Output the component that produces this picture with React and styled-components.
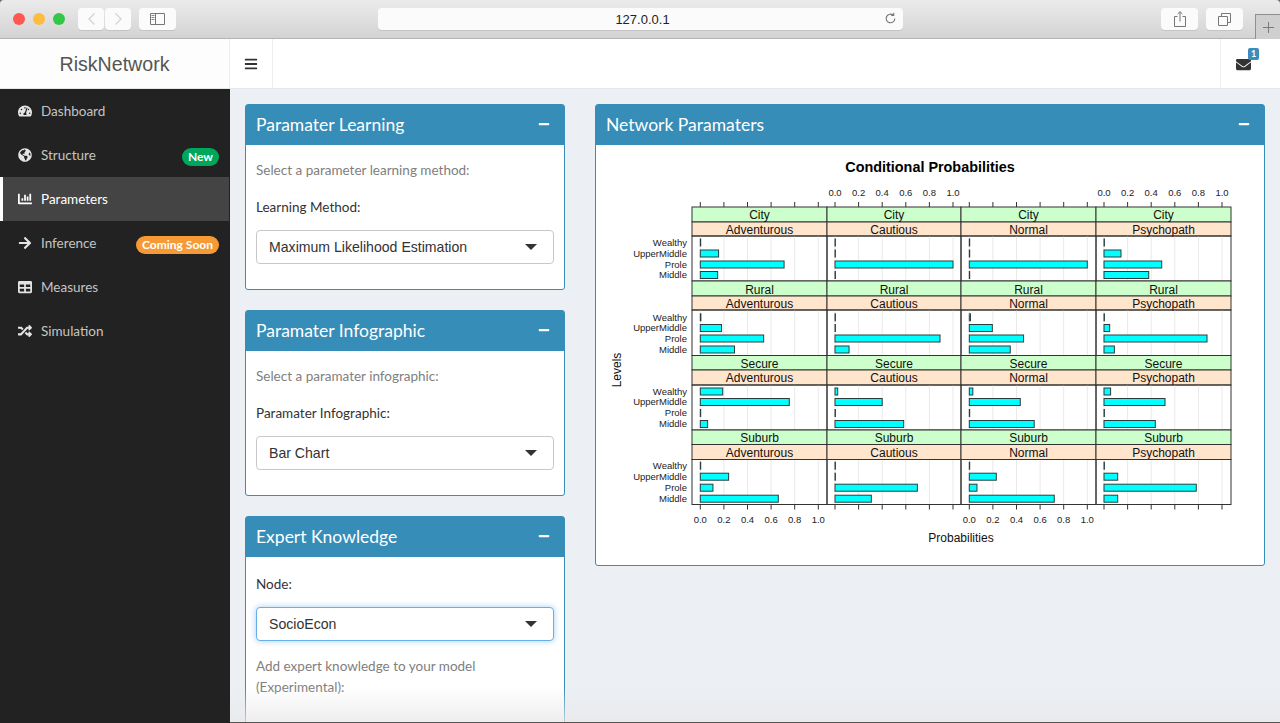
import * as React from "react";
import styled, { createGlobalStyle } from "styled-components";
import {
  FaTachometerAlt,
  FaGlobeAmericas,
  FaChartBar,
  FaArrowRight,
  FaTable,
  FaRandom,
  FaBars,
  FaEnvelope,
  FaMinus,
} from "react-icons/fa";

const Global = createGlobalStyle`
  html, body {
    margin: 0;
    padding: 0;
    height: 100%;
    overflow: hidden;
    background: #6b6b6b;
  }
  * { box-sizing: border-box; }
`;

const Page = styled.div`
  width: 1280px;
  height: 723px;
  overflow: hidden;
  display: flex;
  flex-direction: column;
  font-family: Lato, "Noto Sans", sans-serif;
  font-size: 14px;
`;

/* ---- safari toolbar ---- */
const Chrome = styled.div`
  height: 39px;
  flex: none;
  display: flex;
  align-items: flex-start;
  padding: 8px 0 0 13px;
  background: linear-gradient(#ebebeb, #d3d3d3);
  border-bottom: 1px solid #b4b4b4;
  border-radius: 4px 4px 0 0;
`;
const Light = styled.span`
  width: 12px;
  height: 12px;
  margin: 5px 8px 0 0;
  border-radius: 50%;
  background: ${(p) => p.$color};
`;
const ChromeBtn = styled.div`
  width: ${(p) => p.$w}px;
  height: 22px;
  margin-left: ${(p) => p.$ml || 0}px;
  display: flex;
  align-items: center;
  justify-content: center;
  background: #fbfbfb;
  border-radius: 4px;
  box-shadow: 0 1px 0 #c4c4c4;
`;
const AddressBar = styled.div`
  position: relative;
  width: 525px;
  height: 22px;
  margin-left: 202px;
  display: flex;
  align-items: center;
  justify-content: center;
  padding-left: 4px;
  background: #fbfbfb;
  border-radius: 4px;
  box-shadow: 0 1px 0 #c4c4c4;
  font-family: "Liberation Sans", sans-serif;
  font-size: 13px;
  color: #222;
  svg {
    position: absolute;
    right: 6px;
    top: 4px;
  }
`;
const NewTab = styled.div`
  width: 25px;
  height: 25px;
  margin: 6px 0 0 auto;
  display: flex;
  align-items: center;
  justify-content: center;
  border: 1px solid #8f8f8f;
  border-width: 1px 0 0 1px;
  background: #cfcfcf;
`;

/* ---- admin header ---- */
const TopNav = styled.header`
  height: 50px;
  flex: none;
  display: flex;
  background: #fff;
  border-bottom: 1px solid #e4e7ec;
`;
const Logo = styled.div`
  width: 230px;
  display: flex;
  align-items: center;
  justify-content: center;
  padding-top: 2px;
  background: #fdfdfd;
  border-right: 1px solid #eee;
  font-family: "Liberation Sans", sans-serif;
  font-size: 19.6px;
  color: #555;
`;
const Toggle = styled.div`
  width: 43px;
  display: flex;
  align-items: center;
  justify-content: center;
  border-right: 1px solid #eee;
  color: #333;
  font-size: 14px;
`;
const NavRight = styled.div`
  position: relative;
  width: 60px;
  margin-left: auto;
  display: flex;
  align-items: center;
  justify-content: center;
  padding: 2px 14px 0 0;
  border-left: 1px solid #eee;
  color: #333;
  font-size: 15px;
`;
const MailCount = styled.span`
  position: absolute;
  top: 9px;
  left: 27px;
  width: 11px;
  height: 12px;
  border-radius: 2px;
  background: #3c8dbc;
  color: #fff;
  font-size: 9px;
  font-weight: 700;
  line-height: 12px;
  text-align: center;
`;

/* ---- sidebar ---- */
const Body = styled.div`
  flex: 1;
  min-height: 0;
  display: flex;
`;
const Sidebar = styled.nav`
  width: 230px;
  flex: none;
  background: #222;
`;
const MenuItem = styled.div`
  height: 44px;
  margin-right: 1px;
  display: flex;
  align-items: center;
  padding: 0 10px 0 ${(p) => (p.$active ? 15 : 18)}px;
  border-left: ${(p) => (p.$active ? "3px solid #fff" : "none")};
  background: ${(p) => (p.$active ? "#444" : "transparent")};
  color: ${(p) => (p.$active ? "#fff" : "#c4c4c4")};
  font-size: 13.5px;
`;
const MenuIcon = styled.span`
  width: 23px;
  flex: none;
  display: flex;
  color: ${(p) => (p.$active ? "#fff" : "#e4e4e4")};
  font-size: 14px;
`;
const Badge = styled.span`
  height: 18px;
  margin: 3px 0 0 auto;
  padding: 0 6px;
  border-radius: 9px;
  background: ${(p) => p.$color};
  color: #fff;
  font-size: 12px;
  font-weight: 700;
  line-height: 18px;
`;

/* ---- content ---- */
const Content = styled.main`
  position: relative;
  flex: 1;
  display: flex;
  align-items: flex-start;
  gap: 30px;
  padding: 15px 15px 0;
  overflow: hidden;
  background: #ecf0f5;
`;
const LeftColumn = styled.div`
  width: 320px;
  flex: none;
  display: flex;
  flex-direction: column;
  gap: 20px;
`;
const Box = styled.section`
  flex: none;
  background: #fff;
  border: 1px solid #368db8;
  border-radius: 3px;
`;
const BoxHeader = styled.div`
  height: 40px;
  display: flex;
  align-items: center;
  justify-content: space-between;
  padding: 0 14px 2px 10px;
  background: #368db8;
  color: #fff;
  font-size: 17.5px;
`;
const Collapse = styled.span`
  display: flex;
  font-size: 12px;
`;
const BoxBody = styled.div`
  padding: ${(p) => p.$pt || 15}px 10px ${(p) => p.$pb}px;
`;
const Help = styled.p`
  margin: 0 0 ${(p) => p.$mb || 0}px;
  color: #808080;
  font-size: 13.5px;
  line-height: 21px;
`;
const Label = styled.div`
  margin-bottom: 13px;
  color: #333;
  font-size: 13.5px;
  line-height: 20px;
`;
const SelectBox = styled.div`
  height: 34px;
  margin-bottom: ${(p) => p.$mb || 0}px;
  display: flex;
  align-items: center;
  justify-content: space-between;
  padding: 0 16px 0 12px;
  background: #fff;
  border: 1px solid ${(p) => (p.$focused ? "#66afe9" : "#c8c8c8")};
  border-radius: 4px;
  box-shadow: ${(p) => (p.$focused ? "0 0 6px rgba(102, 175, 233, 0.6)" : "none")};
  font-family: "Liberation Sans", sans-serif;
  font-size: 14.1px;
  color: #333;
`;
const Caret = styled.span`
  width: 0;
  height: 0;
  border-style: solid;
  border-width: 6px 6px 0;
  border-color: #333 transparent transparent;
`;
const ChartBox = styled(Box)`
  width: 670px;
`;
const Fade = styled.div`
  position: absolute;
  left: 0;
  right: 0;
  bottom: 0;
  height: 36px;
  background: linear-gradient(rgba(235, 235, 235, 0), rgba(232, 232, 232, 0.75));
  border-bottom: 1px solid #555;
  pointer-events: none;
`;
const ChartSvg = styled.svg`
  display: block;
  font-family: "Liberation Sans", sans-serif;
`;

const columnX = [692, 827, 961, 1096, 1231];
const zeroX = [700.3, 835, 969.3, 1104];
const SCALE = 118;
const ticks = [0, 0.2, 0.4, 0.6, 0.8, 1];
const levels = ["Wealthy", "UpperMiddle", "Prole", "Middle"];
const personalities = ["Adventurous", "Cautious", "Normal", "Psychopath"];

const rows = [
  {
    name: "City",
    top: 207,
    strip: 222,
    panel: 236,
    bottom: 281,
    nameY: 218.5,
    typeY: 233.5,
    y: [242.5, 253.5, 264.5, 275],
    values: [
      [0, 0.155, 0.71, 0.147],
      [0, 0, 1, 0],
      [0, 0, 1, 0],
      [0, 0.144, 0.489, 0.379],
    ],
  },
  {
    name: "Rural",
    top: 281,
    strip: 296,
    panel: 310,
    bottom: 355.5,
    nameY: 293.5,
    typeY: 307.5,
    y: [317.3, 328, 338.5, 349.5],
    values: [
      [0.005, 0.18, 0.537, 0.29],
      [0, 0, 0.89, 0.119],
      [0.01, 0.195, 0.46, 0.347],
      [0, 0.048, 0.873, 0.088],
    ],
  },
  {
    name: "Secure",
    top: 355.5,
    strip: 370,
    panel: 385,
    bottom: 430,
    nameY: 368,
    typeY: 381.5,
    y: [391.5, 402, 413, 424],
    values: [
      [0.19, 0.754, 0, 0.062],
      [0.023, 0.4, 0, 0.582],
      [0.03, 0.432, 0, 0.55],
      [0.056, 0.517, 0, 0.435],
    ],
  },
  {
    name: "Suburb",
    top: 430,
    strip: 444.5,
    panel: 459.5,
    bottom: 504.5,
    nameY: 442,
    typeY: 457,
    y: [465.7, 476.7, 487.7, 498.7],
    values: [
      [0, 0.24, 0.107, 0.661],
      [0, 0, 0.698, 0.308],
      [0, 0.229, 0.065, 0.72],
      [0, 0.116, 0.782, 0.116],
    ],
  },
];

const Axis = ({ tickFrom, tickTo, labelY, labelled }) =>
  zeroX.map((zero, c) =>
    ticks.map((t) => (
      <g key={`${c}-${t}`}>
        <line x1={zero + t * SCALE} x2={zero + t * SCALE} y1={tickFrom} y2={tickTo} stroke="#333" />
        {labelled.includes(c) && (
          <text x={zero + t * SCALE} y={labelY} fontSize="9.5" fill="#222" textAnchor="middle">
            {t.toFixed(1)}
          </text>
        )}
      </g>
    ))
  );

const Row = ({ row }) => (
  <g>
    {personalities.map((type, c) => {
      const left = columnX[c];
      const right = columnX[c + 1];
      const mid = (left + right) / 2;
      return (
        <g key={type}>
          <rect x={left} y={row.top} width={right - left} height={row.strip - row.top} fill="#ccffcc" stroke="#333" />
          <rect x={left} y={row.strip} width={right - left} height={row.panel - row.strip} fill="#ffe5cc" stroke="#333" />
          <text x={mid} y={row.nameY} fontSize="12" fill="#111" textAnchor="middle">{row.name}</text>
          <text x={mid} y={row.typeY} fontSize="12" fill="#111" textAnchor="middle">{type}</text>
          {ticks.map((t) => (
            <line
              key={t}
              x1={zeroX[c] + t * SCALE}
              x2={zeroX[c] + t * SCALE}
              y1={row.panel}
              y2={row.bottom}
              stroke="#e9e9e9"
            />
          ))}
          {row.values[c].map((v, i) => (
            <rect
              key={levels[i]}
              x={zeroX[c]}
              y={row.y[i] - 3.5}
              width={Math.max(v * SCALE, 0.4)}
              height={7}
              fill="#00ffff"
              stroke="#2c3c3c"
              strokeWidth="1"
            />
          ))}
          <rect x={left} y={row.panel} width={right - left} height={row.bottom - row.panel} fill="none" stroke="#333" />
        </g>
      );
    })}
    {levels.map((level, i) => (
      <text key={level} x={687} y={row.y[i] + 3.4} fontSize="9.5" fill="#222" textAnchor="end">
        {level}
      </text>
    ))}
  </g>
);

const ProbabilityChart = () => (
  <ChartSvg width="668" height="420" viewBox="596 145 668 420">
    <text x={930} y={172} fontSize="14.4" fontWeight="700" fill="#000" textAnchor="middle">
      Conditional Probabilities
    </text>
    <Axis tickFrom={202} tickTo={207} labelY={196} labelled={[1, 3]} />
    <Axis tickFrom={504.5} tickTo={509.5} labelY={523} labelled={[0, 2]} />
    {rows.map((row) => (
      <Row key={row.name} row={row} />
    ))}
    <text x={961} y={542} fontSize="12" fill="#111" textAnchor="middle">Probabilities</text>
    <text transform="translate(621 370) rotate(-90)" fontSize="12" fill="#111" textAnchor="middle">Levels</text>
  </ChartSvg>
);

const menu = [
  { label: "Dashboard", icon: <FaTachometerAlt /> },
  { label: "Structure", icon: <FaGlobeAmericas />, badge: "New", color: "#00a65a" },
  { label: "Parameters", icon: <FaChartBar />, active: true },
  { label: "Inference", icon: <FaArrowRight />, badge: "Coming Soon", color: "#f59a35" },
  { label: "Measures", icon: <FaTable /> },
  { label: "Simulation", icon: <FaRandom /> },
];

const Panel = ({ title, children, pt, pb }) => (
  <Box>
    <BoxHeader>
      {title}
      <Collapse><FaMinus /></Collapse>
    </BoxHeader>
    <BoxBody $pt={pt} $pb={pb}>{children}</BoxBody>
  </Box>
);

const Select = ({ value, focused, mb }) => (
  <SelectBox $focused={focused} $mb={mb}>
    {value}
    <Caret />
  </SelectBox>
);

const App = () => (
  <Page>
    <Global />
    <Chrome>
      <Light $color="#fc5753" />
      <Light $color="#fdbc40" />
      <Light $color="#33c748" />
      <ChromeBtn $w={26} $ml={5}>
        <svg width="9" height="14" viewBox="0 0 9 14"><path d="M7.5 1.5 2 7l5.5 5.5" fill="none" stroke="#d4d4d4" strokeWidth="1.4" /></svg>
      </ChromeBtn>
      <ChromeBtn $w={26} $ml={1}>
        <svg width="9" height="14" viewBox="0 0 9 14"><path d="M1.5 1.5 7 7l-5.5 5.5" fill="none" stroke="#d4d4d4" strokeWidth="1.4" /></svg>
      </ChromeBtn>
      <ChromeBtn $w={37} $ml={8}>
        <svg width="15" height="12" viewBox="0 0 15 12">
          <path d="M.5.5h14v11H.5zM5.5.5v11" fill="none" stroke="#777" />
          <path d="M1.5 2.5h3M1.5 4.5h3M1.5 6.5h3" stroke="#888" />
        </svg>
      </ChromeBtn>
      <AddressBar>
        127.0.0.1
        <svg width="13" height="13" viewBox="0 0 12 12">
          <path d="M10 6a4 4 0 1 1-1.3-3M9 .8V3.2H6.6" fill="none" stroke="#777" />
        </svg>
      </AddressBar>
      <ChromeBtn $w={37} $ml={258}>
        <svg width="12" height="16" viewBox="0 0 12 16">
          <path d="M3.5 5.5h-3v10h11v-10h-3M6 10.5V.8M3.6 3 6 .7 8.4 3" fill="none" stroke="#777" />
        </svg>
      </ChromeBtn>
      <ChromeBtn $w={37} $ml={8}>
        <svg width="13" height="13" viewBox="0 0 13 13">
          <path d="M.5 3.5h9v9h-9zM3.5 3.5v-3h9v9h-3" fill="none" stroke="#777" />
        </svg>
      </ChromeBtn>
      <NewTab>
        <svg width="11" height="11" viewBox="0 0 11 11"><path d="M5.5 0v11M0 5.5h11" stroke="#7a7a7a" /></svg>
      </NewTab>
    </Chrome>
    <TopNav>
      <Logo>RiskNetwork</Logo>
      <Toggle><FaBars /></Toggle>
      <NavRight>
        <FaEnvelope />
        <MailCount>1</MailCount>
      </NavRight>
    </TopNav>
    <Body>
      <Sidebar>
        {menu.map((item) => (
          <MenuItem key={item.label} $active={item.active}>
            <MenuIcon $active={item.active}>{item.icon}</MenuIcon>
            {item.label}
            {item.badge && <Badge $color={item.color}>{item.badge}</Badge>}
          </MenuItem>
        ))}
      </Sidebar>
      <Content>
        <LeftColumn>
          <Panel title="Paramater Learning" pb={25}>
            <Help $mb={16}>Select a parameter learning method:</Help>
            <Label>Learning Method:</Label>
            <Select value="Maximum Likelihood Estimation" />
          </Panel>
          <Panel title="Paramater Infographic" pb={25}>
            <Help $mb={16}>Select a paramater infographic:</Help>
            <Label>Paramater Infographic:</Label>
            <Select value="Bar Chart" />
          </Panel>
          <Panel title="Expert Knowledge" pt={17} pb={60}>
            <Label>Node:</Label>
            <Select value="SocioEcon" focused mb={15} />
            <Help>Add expert knowledge to your model (Experimental):</Help>
          </Panel>
        </LeftColumn>
        <ChartBox>
          <BoxHeader>
            Network Paramaters
            <Collapse><FaMinus /></Collapse>
          </BoxHeader>
          <ProbabilityChart />
        </ChartBox>
        <Fade />
      </Content>
    </Body>
  </Page>
);

export default App;
